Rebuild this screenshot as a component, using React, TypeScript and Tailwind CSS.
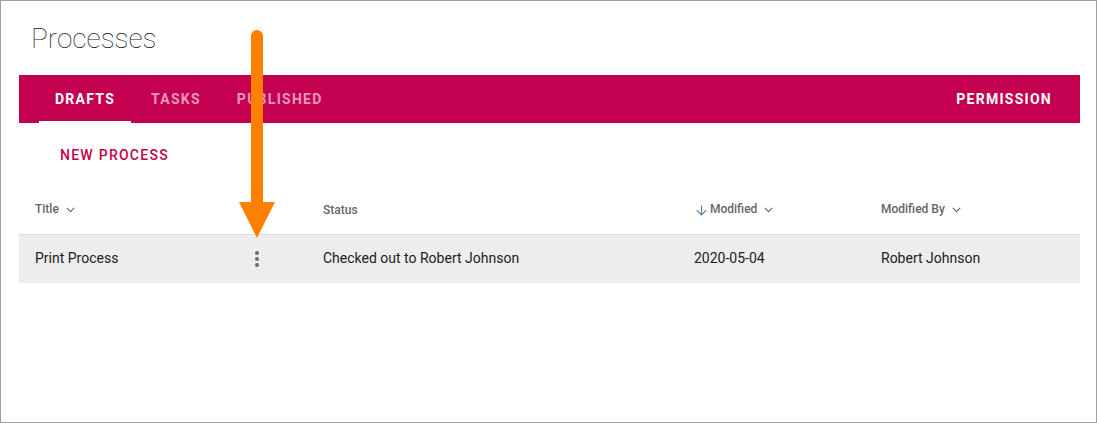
import React from "react";

const tabs = ["Drafts", "Tasks", "Published"];

function Chevron() {
  return (
    <svg className="mt-0.5" width="9" height="6" viewBox="0 0 9 6" fill="none" stroke="#666" strokeWidth="1.1" aria-hidden="true">
      <path d="M0.8 0.9 4.5 4.6 8.2 0.9" />
    </svg>
  );
}

function SortArrow() {
  return (
    <svg className="mt-0.5" width="11" height="11" viewBox="0 0 11 11" fill="none" stroke="#5f7f98" strokeWidth="1.2" aria-hidden="true">
      <path d="M5.5 0.5V10M0.7 5.2 5.5 10 10.3 5.2" />
    </svg>
  );
}

function HeaderButton({ label, sorted = false }: { label: string; sorted?: boolean }) {
  return (
    <button type="button" className="flex items-center gap-[7px] leading-4 font-medium">
      <span className={sorted ? "flex items-center gap-[3px] pl-0.5" : undefined}>
        {sorted && <SortArrow />}
        {label}
      </span>
      <Chevron />
    </button>
  );
}

function PointerArrow() {
  return (
    <svg
      className="pointer-events-none absolute bottom-full left-1/2 mb-[13px] -translate-x-1/2"
      width="36"
      height="208"
      viewBox="0 0 36 208"
      fill="#ff8000"
      aria-hidden="true"
    >
      <path d="M12 6a6 6 0 0 1 12 0V172H36L18 208 0 172H12Z" />
    </svg>
  );
}

export default function App() {
  return (
    <main className="min-h-screen border border-[#a0a0a0] bg-white pt-5 pr-4 pl-[18px] font-[Roboto,sans-serif] text-sm text-[#212121]">
      <h1 className="pl-3 text-[28px] leading-9 font-thin">Processes</h1>

      <div className="mt-[18px] flex h-12 items-stretch justify-between bg-[#c40050] px-5 text-white">
        <div role="tablist" className="flex gap-1">
          {tabs.map((tab, i) => (
            <button
              key={tab}
              type="button"
              role="tab"
              aria-selected={i === 0}
              className={
                i === 0
                  ? "border-y-2 border-t-transparent border-b-white px-4 font-bold tracking-[0.09em] uppercase"
                  : "border-y-2 border-transparent px-4 font-bold tracking-[0.09em] text-white/60 uppercase"
              }
            >
              {tab}
            </button>
          ))}
        </div>
        <button type="button" className="px-2 font-bold tracking-[0.09em] uppercase">
          Permission
        </button>
      </div>

      <div className="flex h-16 items-center pl-[41px]">
        <button type="button" className="font-medium tracking-[0.09em] text-[#c40050] uppercase">
          New Process
        </button>
      </div>

      <table className="w-full table-fixed text-left">
        <colgroup>
          <col className="w-[216px]" />
          <col className="w-[72px]" />
          <col />
          <col className="w-[187px]" />
          <col className="w-[215px]" />
        </colgroup>
        <thead className="text-xs text-[#666]">
          <tr className="h-[47px] border-b border-[#dcdcdc]">
            <th className="px-4 pb-0.5 font-medium"><HeaderButton label="Title" /></th>
            <th className="px-4" aria-label="Actions" />
            <th className="px-4 font-medium">Status</th>
            <th className="px-4 pb-0.5 font-medium"><HeaderButton label="Modified" sorted /></th>
            <th className="px-4 pb-0.5 font-medium"><HeaderButton label="Modified By" /></th>
          </tr>
        </thead>
        <tbody>
          <tr className="h-[49px] bg-[#ededed]">
            <td className="px-4 pb-0.5">Print Process</td>
            <td className="px-4">
              <div className="relative w-3">
                <button type="button" aria-label="More options" className="block">
                  <svg width="12" height="16" viewBox="0 0 12 16" fill="#666c72" aria-hidden="true">
                    <circle cx="6" cy="2" r="2" />
                    <circle cx="6" cy="8" r="2" />
                    <circle cx="6" cy="14" r="2" />
                  </svg>
                </button>
                <PointerArrow />
              </div>
            </td>
            <td className="px-4 pb-0.5">Checked out to Robert Johnson</td>
            <td className="px-4 pb-0.5">2020-05-04</td>
            <td className="px-4 pb-0.5">Robert Johnson</td>
          </tr>
        </tbody>
      </table>
    </main>
  );
}
